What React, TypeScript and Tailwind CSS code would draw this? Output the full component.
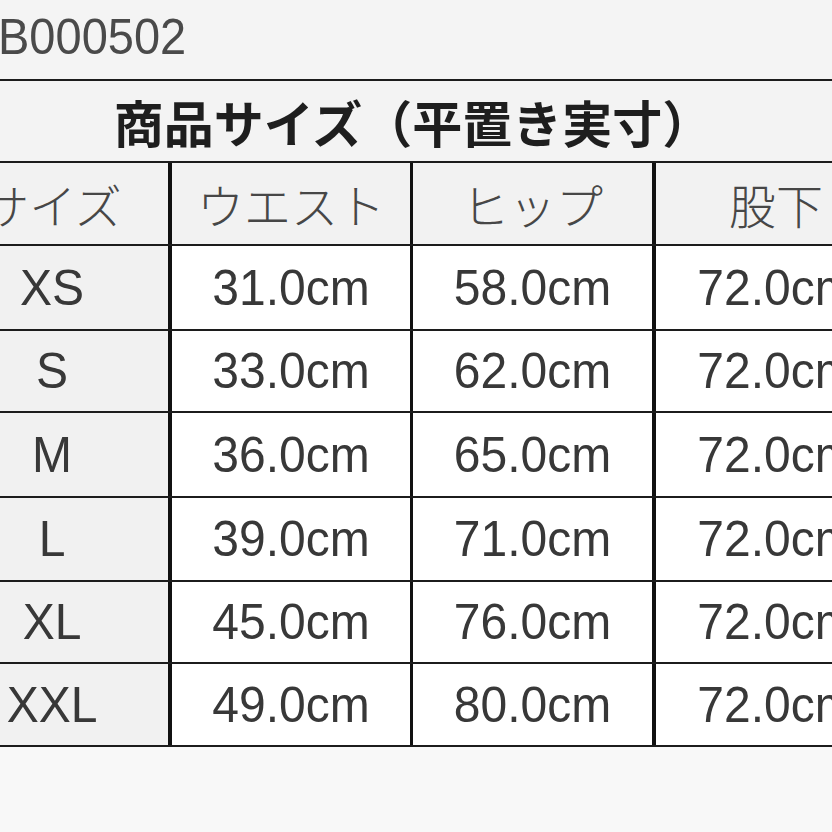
import React from "react";

type Row = {
  size: string;
  waist: string;
  hip: string;
  inseam: string;
  h: string;
};

const rows: Row[] = [
  { size: "XS", waist: "31.0cm", hip: "58.0cm", inseam: "72.0cm", h: "h-[85px]" },
  { size: "S", waist: "33.0cm", hip: "62.0cm", inseam: "72.0cm", h: "h-[82px]" },
  { size: "M", waist: "36.0cm", hip: "65.0cm", inseam: "72.0cm", h: "h-[85px]" },
  { size: "L", waist: "39.0cm", hip: "71.0cm", inseam: "72.0cm", h: "h-[84px]" },
  { size: "XL", waist: "45.0cm", hip: "76.0cm", inseam: "72.0cm", h: "h-[82px]" },
  { size: "XXL", waist: "49.0cm", hip: "80.0cm", inseam: "72.0cm", h: "h-[83px]" },
];

const jp = "font-['Noto_Sans_CJK_JP',sans-serif]";
const latin = "font-['Liberation_Sans','Noto_Sans_CJK_JP',sans-serif]";

const Num = ({ children }: { children: React.ReactNode }) => (
  <span className={`inline-block scale-y-[1.06] text-[48px] leading-none text-[#383838] ${latin}`}>
    {children}
  </span>
);

const Head = ({ children }: { children: React.ReactNode }) => (
  <span className={`text-[47px] leading-none font-light text-[#474747] ${jp}`}>{children}</span>
);

export default function App() {
  return (
    <div className="w-[832px] h-[832px] overflow-hidden bg-[#f4f4f4]">
      <div className="h-[79px] pt-[13px]">
        <span className={`inline-block scale-y-[1.08] text-[47px] leading-none text-[#4a4a4a] ml-[-2px] ${latin}`}>
          B000502
        </span>
      </div>

      <div className="ml-[-64px] w-[960px] border-t-2 border-[#1c1c1c]">
        <div className="h-[82px] border-b-2 border-[#1c1c1c] bg-[#f3f3f3] flex items-center justify-center pr-[6px]">
          <span className={`text-[50px] leading-none font-bold text-[#1e1e1e] ${jp}`}>
            商品サイズ（平置き実寸）
          </span>
        </div>

        <div className="grid grid-cols-[236px_241px_243px_240px] h-[83px] border-b-2 border-[#1c1c1c] bg-[#f2f2f2]">
          <div className="border-r-4 border-[#111] flex items-center justify-center">
            <Head>サイズ</Head>
          </div>
          <div className="border-r-[3px] border-[#111] flex items-center justify-center">
            <Head>ウエスト</Head>
          </div>
          <div className="border-r-4 border-[#111] flex items-center justify-center">
            <Head>ヒップ</Head>
          </div>
          <div className="flex items-center justify-center">
            <Head>股下</Head>
          </div>
        </div>

        {rows.map((row, index) => (
          <div
            key={index + 1}
            className={`grid grid-cols-[236px_241px_243px_240px] ${row.h} border-b-2 border-[#1c1c1c]`}
          >
            <div className="bg-[#f1f1f1] border-r-4 border-[#111] flex items-center justify-center">
              <Num>{row.size}</Num>
            </div>
            <div className="bg-white border-r-[3px] border-[#111] flex items-center justify-center">
              <Num>{row.waist}</Num>
            </div>
            <div className="bg-white border-r-4 border-[#111] flex items-center justify-center">
              <Num>{row.hip}</Num>
            </div>
            <div className="bg-white flex items-center justify-center">
              <Num>{row.inseam}</Num>
            </div>
          </div>
        ))}
      </div>

      <div className="h-[90px] bg-[#f8f8f8]" />
    </div>
  );
}
